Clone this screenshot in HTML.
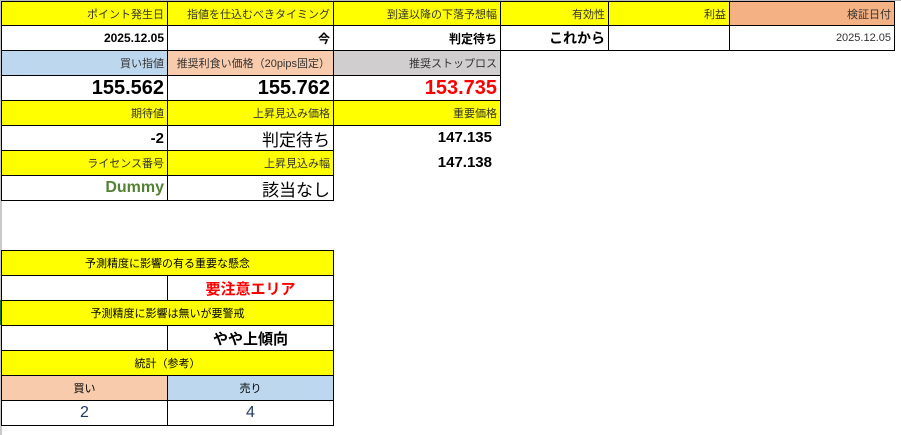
<!DOCTYPE html>
<html><head><meta charset="utf-8"><style>
body{margin:0;width:901px;height:435px;background:#fff;position:relative;overflow:hidden;font-family:"Liberation Sans","Noto Sans CJK JP",sans-serif;}
.c{position:absolute;box-sizing:border-box;border:1px solid #000;display:flex;align-items:center;justify-content:flex-end;padding-right:3px;white-space:nowrap;color:#000;}
.y{background:#ffff00;color:#333;font-size:11px;}
.h{font-size:12px;font-weight:bold;}
.b{font-size:20px;font-weight:bold;}
.m{font-size:17px;}
.ctr{justify-content:center;padding:0;}
</style></head><body>
<div style="position:absolute;left:0;top:0;width:2px;height:435px;background:#c8c8c8"></div>
<div style="position:absolute;left:0;top:0;width:901px;height:1px;background:#bbb"></div>
<div style="position:absolute;left:0;top:300px;width:2px;height:25px;background:#1a7a1a"></div>
<!-- row 1 -->
<div class="c y" style="left:1px;top:1px;width:167px;height:25px">ポイント発生日</div>
<div class="c y" style="left:167px;top:1px;width:167px;height:25px">指値を仕込むべきタイミング</div>
<div class="c y" style="left:333px;top:1px;width:168px;height:25px">到達以降の下落予想幅</div>
<div class="c y" style="left:500px;top:1px;width:109px;height:25px">有効性</div>
<div class="c y" style="left:608px;top:1px;width:122px;height:25px">利益</div>
<div class="c" style="left:729px;top:1px;width:166px;height:25px;background:#f4b183;font-size:11px;color:#333">検証日付</div>
<!-- row 2 -->
<div class="c h" style="left:1px;top:25px;width:167px;height:26px">2025.12.05</div>
<div class="c h" style="left:167px;top:25px;width:167px;height:26px">今</div>
<div class="c h" style="left:333px;top:25px;width:168px;height:26px">判定待ち</div>
<div class="c h" style="left:500px;top:25px;width:109px;height:26px;font-size:14px">これから</div>
<div class="c" style="left:608px;top:25px;width:122px;height:26px"></div>
<div class="c" style="left:729px;top:25px;width:166px;height:26px;font-size:11px;color:#333">2025.12.05</div>
<!-- row 3 -->
<div class="c" style="left:1px;top:50px;width:167px;height:26px;background:#bdd7ee;font-size:11px;color:#333">買い指値</div>
<div class="c" style="left:167px;top:50px;width:167px;height:26px;background:#f8cbad;font-size:11px;color:#333">推奨利食い価格（20pips固定）</div>
<div class="c" style="left:333px;top:50px;width:168px;height:26px;background:#d0cece;font-size:11px;color:#333">推奨ストップロス</div>
<!-- row 4 -->
<div class="c b" style="left:1px;top:75px;width:167px;height:26px">155.562</div>
<div class="c b" style="left:167px;top:75px;width:167px;height:26px">155.762</div>
<div class="c b" style="left:333px;top:75px;width:168px;height:26px;color:#ff0000">153.735</div>
<!-- row 5 -->
<div class="c y" style="left:1px;top:100px;width:167px;height:26px">期待値</div>
<div class="c y" style="left:167px;top:100px;width:167px;height:26px">上昇見込み価格</div>
<div class="c y" style="left:333px;top:100px;width:168px;height:26px">重要価格</div>
<!-- row 6 -->
<div class="c" style="left:1px;top:125px;width:167px;height:26px;font-size:15px;font-weight:bold">-2</div>
<div class="c m" style="left:167px;top:125px;width:167px;height:26px">判定待ち</div>
<div style="position:absolute;left:333px;top:125px;width:159px;height:25px;display:flex;align-items:center;justify-content:flex-end;font-size:15px;font-weight:bold">147.135</div>
<!-- row 7 -->
<div class="c y" style="left:1px;top:150px;width:167px;height:26px">ライセンス番号</div>
<div class="c y" style="left:167px;top:150px;width:167px;height:26px">上昇見込み幅</div>
<div style="position:absolute;left:333px;top:150px;width:159px;height:25px;display:flex;align-items:center;justify-content:flex-end;font-size:15px;font-weight:bold">147.138</div>
<!-- row 8 -->
<div class="c" style="left:1px;top:175px;width:167px;height:26px;font-size:16px;font-weight:bold;color:#548235">Dummy</div>
<div class="c m" style="left:167px;top:175px;width:167px;height:26px">該当なし</div>
<!-- lower -->
<div class="c y ctr" style="left:1px;top:250px;width:333px;height:26px;color:#000">予測精度に影響の有る重要な懸念</div>
<div class="c" style="left:1px;top:275px;width:167px;height:26px"></div>
<div class="c ctr" style="left:167px;top:275px;width:167px;height:26px;font-size:15px;font-weight:bold;color:#ff0000">要注意エリア</div>
<div class="c y ctr" style="left:1px;top:300px;width:333px;height:26px;color:#000">予測精度に影響は無いが要警戒</div>
<div class="c" style="left:1px;top:325px;width:167px;height:26px"></div>
<div class="c ctr" style="left:167px;top:325px;width:167px;height:26px;font-size:15px;font-weight:bold">やや上傾向</div>
<div class="c y ctr" style="left:1px;top:350px;width:333px;height:26px;color:#000">統計（参考）</div>
<div class="c ctr" style="left:1px;top:375px;width:167px;height:26px;background:#f8cbad;font-size:11px">買い</div>
<div class="c ctr" style="left:167px;top:375px;width:167px;height:26px;background:#bdd7ee;font-size:11px">売り</div>
<div class="c ctr" style="left:1px;top:400px;width:167px;height:26px;font-size:16px;color:#1f3864">2</div>
<div class="c ctr" style="left:167px;top:400px;width:167px;height:26px;font-size:16px;color:#1f3864">4</div>
</body></html>
